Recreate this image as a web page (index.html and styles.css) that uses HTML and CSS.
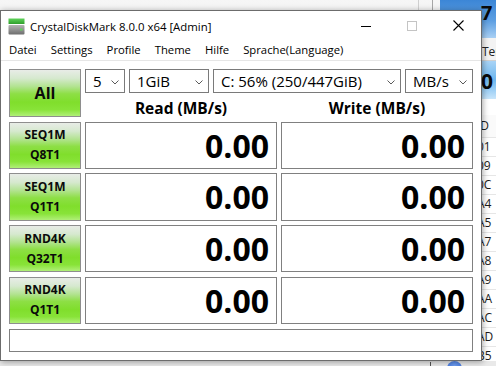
FILE: index.html
```html
<!DOCTYPE html>
<html>
<head>
<meta charset="utf-8">
<link rel="stylesheet" href="styles.css">
</head>
<body>
<div class="bg-app">
  <div class="bg-toolbar"><span class="bg-sep light"></span><span class="bg-sep dark"></span></div>
  <div class="bg-side">
    <div class="bg-disk">7 B</div>
    <div class="bg-label">Temperatur</div>
    <div class="bg-temp">30 °C</div>
    <div class="bg-table">
      <div class="bg-row head">ID</div>
      <div class="bg-row">01</div>
      <div class="bg-row">09</div>
      <div class="bg-row">0C</div>
      <div class="bg-row">A4</div>
      <div class="bg-row">A5</div>
      <div class="bg-row">A7</div>
      <div class="bg-row">A8</div>
      <div class="bg-row">A9</div>
      <div class="bg-row">AA</div>
      <div class="bg-row">AC</div>
      <div class="bg-row">AD</div>
      <div class="bg-row">B5</div>
    </div>
  </div>
  <div class="bg-foot"><span class="bg-tick"></span><span class="bg-dot"></span></div>
</div>

<div class="window">
  <div class="titlebar">
    <svg class="app-icon" width="17" height="17" viewBox="0 0 17 17">
      <defs>
        <linearGradient id="gTop" x1="0" y1="0" x2="0" y2="1">
          <stop offset="0" stop-color="#5fd35a"/>
          <stop offset="1" stop-color="#2f9e2c"/>
        </linearGradient>
        <linearGradient id="gDisk" x1="0" y1="0" x2="0" y2="1">
          <stop offset="0" stop-color="#b4b4b4"/>
          <stop offset="1" stop-color="#6e6e6e"/>
        </linearGradient>
      </defs>
      <rect x="0.5" y="0.5" width="16" height="5.5" fill="url(#gTop)"/>
      <rect x="0.5" y="7" width="16" height="9.5" rx="1" fill="url(#gDisk)"/>
      <rect x="12" y="10.5" width="2.5" height="2" fill="#5fd35a"/>
    </svg>
    <span class="title">CrystalDiskMark 8.0.0 x64 [Admin]</span>
    <div class="caption">
      <span class="cap-btn"><svg width="10" height="10" viewBox="0 0 10 10"><line x1="0" y1="5.5" x2="10" y2="5.5" stroke="#000" stroke-width="1"/></svg></span>
      <span class="cap-btn"><svg width="10" height="10" viewBox="0 0 10 10"><rect x="0.5" y="0.5" width="9" height="9" fill="none" stroke="#c4c4c4" stroke-width="1"/></svg></span>
      <span class="cap-btn"><svg width="11" height="11" viewBox="0 0 11 11"><path d="M0.5 0.5 L10.5 10.5 M10.5 0.5 L0.5 10.5" stroke="#000" stroke-width="1.1" fill="none"/></svg></span>
    </div>
  </div>
  <div class="menubar">
    <span class="menu-item">Datei</span>
    <span class="menu-item">Settings</span>
    <span class="menu-item">Profile</span>
    <span class="menu-item">Theme</span>
    <span class="menu-item">Hilfe</span>
    <span class="menu-item">Sprache(Language)</span>
  </div>
  <div class="client">
    <div class="btn btn-all">All</div>
    <div class="top-panel">
      <div class="combos">
        <div class="combo c-count"><span>5</span><svg class="chev" width="8" height="5" viewBox="0 0 8 5"><path d="M0.5 0.5 L4 4 L7.5 0.5" stroke="#5a5a5a" fill="none"/></svg></div>
        <div class="combo c-size"><span>1GiB</span><svg class="chev" width="8" height="5" viewBox="0 0 8 5"><path d="M0.5 0.5 L4 4 L7.5 0.5" stroke="#5a5a5a" fill="none"/></svg></div>
        <div class="combo c-drive"><span>C: 56% (250/447GiB)</span><svg class="chev" width="8" height="5" viewBox="0 0 8 5"><path d="M0.5 0.5 L4 4 L7.5 0.5" stroke="#5a5a5a" fill="none"/></svg></div>
        <div class="combo c-unit"><span>MB/s</span><svg class="chev" width="8" height="5" viewBox="0 0 8 5"><path d="M0.5 0.5 L4 4 L7.5 0.5" stroke="#5a5a5a" fill="none"/></svg></div>
      </div>
      <div class="col-head">Read (MB/s)</div>
      <div class="col-head">Write (MB/s)</div>
    </div>

    <div class="btn btn-test"><span>SEQ1M</span><span>Q8T1</span></div>
    <div class="meter">0.00</div>
    <div class="meter">0.00</div>

    <div class="btn btn-test"><span>SEQ1M</span><span>Q1T1</span></div>
    <div class="meter">0.00</div>
    <div class="meter">0.00</div>

    <div class="btn btn-test"><span>RND4K</span><span>Q32T1</span></div>
    <div class="meter">0.00</div>
    <div class="meter">0.00</div>

    <div class="btn btn-test"><span>RND4K</span><span>Q1T1</span></div>
    <div class="meter">0.00</div>
    <div class="meter">0.00</div>

    <div class="status"></div>
  </div>
</div>
</body>
</html>
```
FILE: styles.css
```css
* { box-sizing: border-box; }

html, body {
  margin: 0;
  padding: 0;
}

body {
  width: 496px;
  height: 366px;
  overflow: hidden;
  position: relative;
  background: #ececec;
  font-family: "Open Sans", "Noto Sans", sans-serif;
  color: #000;
}

/* ---------- background application (desktop) ---------- */
.bg-app {
  position: absolute;
  left: 0;
  top: 0;
  width: 496px;
  height: 366px;
  background: #efefef;
  overflow: hidden;
}

.bg-toolbar {
  position: absolute;
  left: 0;
  top: 0;
  width: 440px;
  height: 40px;
  background: linear-gradient(#f6f6f6, #ededed);
  border-bottom: 1px solid #d4d4d4;
  display: flex;
  justify-content: flex-end;
  padding-right: 7px;
  gap: 13px;
}

.bg-sep {
  width: 1px;
  height: 100%;
}
.bg-sep.light { background: #cfcfcf; }
.bg-sep.dark { background: #a6a6a6; }

.bg-side {
  position: absolute;
  left: 440px;
  top: 0;
  width: 56px;
  height: 366px;
  background: #fff;
  display: flex;
  flex-direction: column;
  overflow: hidden;
}

.bg-disk {
  height: 42px;
  background: linear-gradient(#3c86d6 0%, #5d9fe2 55%, #a9d0f4 100%);
  font-weight: 700;
  font-size: 20px;
  line-height: 26px;
  padding-left: 41px;
  white-space: nowrap;
  overflow: hidden;
  color: #0a0a0a;
}

.bg-label {
  height: 24px;
  background: #f3f3f3;
  border-bottom: 1px solid #cfcfcf;
  font-size: 12px;
  line-height: 22px;
  padding-left: 42px;
  padding-top: 3px;
  white-space: nowrap;
  overflow: hidden;
  color: #222;
}

.bg-temp {
  height: 42px;
  background: linear-gradient(#a9d4f6 0%, #6db6ee 50%, #c9e6fb 100%);
  font-weight: 700;
  font-size: 21px;
  line-height: 40px;
  padding-left: 29px;
  white-space: nowrap;
  overflow: hidden;
  color: #0a0a0a;
}

.bg-table {
  margin-top: 16px;
  display: flex;
  flex-direction: column;
}

.bg-row {
  height: 19px;
  line-height: 18px;
  font-size: 12px;
  padding-left: 37px;
  border-bottom: 1px solid #e6e6e6;
  color: #1a1a1a;
  white-space: nowrap;
  overflow: hidden;
}
.bg-row.head {
  height: 23px;
  line-height: 22px;
  background: #fafafa;
}

.bg-foot {
  position: absolute;
  left: 0;
  top: 361px;
  width: 496px;
  height: 5px;
  background: #e9e9e9;
}
.bg-tick {
  position: absolute;
  left: 430px;
  top: 1px;
  width: 1px;
  height: 4px;
  background: #555;
}
.bg-dot {
  position: absolute;
  left: 447px;
  top: 0;
  width: 15px;
  height: 15px;
  border-radius: 50%;
  background: radial-gradient(circle at 50% 30%, #6d9cf0, #2a5fd0);
}

/* ---------- CrystalDiskMark window ---------- */
.window {
  position: absolute;
  left: 0;
  top: 10px;
  width: 482px;
  height: 351px;
  border: 1px solid #6c6c6c;
  background: #fff;
  box-shadow: 1px 1px 6px rgba(0, 0, 0, 0.35);
  display: flex;
  flex-direction: column;
}

.titlebar {
  height: 29px;
  display: flex;
  align-items: center;
  flex: none;
}

.app-icon {
  margin-left: 7px;
  margin-top: 1px;
  flex: none;
}

.title {
  margin-left: 5px;
  font-size: 11.4px;
  white-space: nowrap;
  color: #000;
  margin-top: 1px;
}

.caption {
  margin-left: auto;
  display: flex;
  align-self: stretch;
}

.cap-btn {
  width: 46px;
  height: 29px;
  display: flex;
  align-items: center;
  justify-content: center;
}

.menubar {
  height: 21px;
  flex: none;
  display: flex;
  align-items: center;
  padding-left: 1px;
  border-bottom: 1px solid #e6e6e6;
  padding-bottom: 1px;
}

.menu-item {
  padding: 0 7px;
  font-size: 11.3px;
  white-space: nowrap;
  line-height: 18px;
}

.client {
  flex: 1;
  padding: 8px;
  display: grid;
  grid-template-columns: 72px 192px 192px;
  grid-template-rows: 48px repeat(4, 47.25px) 23px;
  column-gap: 4px;
  row-gap: 4.5px;
}

.btn {
  border: 1px solid #8e8e8e;
  background: linear-gradient(to bottom,
    #e8ece7 0%,
    #d6e9cf 18%,
    #b2e390 36%,
    #8ddf45 52%,
    #80de2c 70%,
    #88e338 86%,
    #b0ef78 100%);
  display: flex;
  flex-direction: column;
  align-items: center;
  justify-content: center;
  font-weight: 700;
  color: #0b0b0b;
}

.btn-all {
  font-size: 16px;
}

.btn-test {
  font-size: 12px;
  line-height: 20px;
}

.top-panel {
  grid-column: 2 / 4;
  display: grid;
  grid-template-columns: 192px 192px;
  grid-template-rows: 24px 24px;
  column-gap: 4px;
}

.combos {
  grid-column: 1 / 3;
  display: flex;
  gap: 4px;
}

.combo {
  height: 24px;
  border: 1px solid #7a7a7a;
  background: #fff;
  display: flex;
  align-items: center;
  justify-content: space-between;
  padding: 1px 5px 0 7px;
  font-size: 15px;
  line-height: 21px;
  white-space: nowrap;
}

.chev {
  flex: none;
  margin-top: 1px;
}

.c-count { width: 40px; }
.c-size { width: 80px; }
.c-drive { width: 188px; }
.c-unit { width: 68px; }

.col-head {
  text-align: center;
  font-weight: 700;
  font-size: 15.5px;
  line-height: 24px;
  padding-top: 3px;
  white-space: nowrap;
}

.meter {
  border: 1px solid #808080;
  background: #fff;
  display: flex;
  align-items: center;
  justify-content: flex-end;
  padding-right: 7px;
  font-weight: 700;
  font-size: 32px;
  letter-spacing: 0;
  color: #000;
}

.status {
  grid-column: 1 / 4;
  border: 1px solid #808080;
  background: #fff;
}
```
